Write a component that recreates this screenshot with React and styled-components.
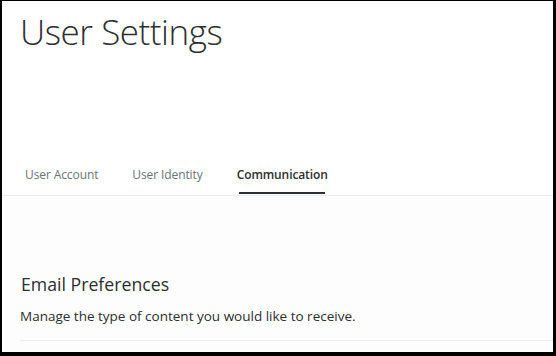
import React from "react";
import styled, { createGlobalStyle } from "styled-components";

const Global = createGlobalStyle`
  html, body { margin: 0; padding: 0; background: #000; }
  body { font-family: "Open Sans", "Liberation Sans", sans-serif; }
  #root { width: 556px; height: 356px; padding: 1px 3px 4px 2px; box-sizing: border-box; }
`;

const Page = styled.div`
  width: 100%;
  height: 100%;
  background: #fff;
  display: flex;
  flex-direction: column;
  overflow: hidden;
`;

const Header = styled.header`
  padding: 7px 0 0 18px;
  height: 148px;
  box-sizing: border-box;
`;

const Title = styled.h1`
  margin: 0;
  font-family: "Open Sans", sans-serif;
  font-weight: 300;
  font-size: 35px;
  line-height: 48px;
  color: #2c2e2f;
  letter-spacing: -0.45px;
`;

const TabBar = styled.nav`
  display: flex;
  gap: 34px;
  padding-left: 23px;
  border-bottom: 1px solid #eaeced;
  height: 47px;
  box-sizing: border-box;
`;

const Tab = styled.div`
  position: relative;
  font-size: 12px;
  line-height: 16px;
  padding-top: 18px;
  color: ${(p) => (p.$active ? "#2c2e2f" : "#6c7378")};
  font-weight: ${(p) => (p.$active ? 600 : 400)};
  letter-spacing: ${(p) => (p.$active ? "-0.1px" : "-0.1px")};
  &::after {
    content: "";
    display: ${(p) => (p.$active ? "block" : "none")};
    position: absolute;
    left: 2px;
    right: 3px;
    bottom: 1px;
    height: 2px;
    background: #2c2e2f;
  }
`;

const Content = styled.section`
  flex: 1;
  background: #fdfdfd;
  padding: 76px 0 0 18px;
`;

const SectionTitle = styled.h2`
  margin: 0 0 0 1px;
  font-size: 17.7px;
  font-weight: 400;
  line-height: 24px;
  color: #2c2e2f;
`;

const SectionText = styled.p`
  margin: 10px 0 0;
  font-size: 13.5px;
  line-height: 20px;
  color: #2c2e2f;
  padding-bottom: 14px;
  border-bottom: 1px solid #eaeced;
`;

export default function App() {
  return (
    <>
      <Global />
      <Page>
        <Header>
          <Title>User Settings</Title>
        </Header>
        <TabBar>
          <Tab>User Account</Tab>
          <Tab>User Identity</Tab>
          <Tab $active>Communication</Tab>
        </TabBar>
        <Content>
          <SectionTitle>Email Preferences</SectionTitle>
          <SectionText>Manage the type of content you would like to receive.</SectionText>
        </Content>
      </Page>
    </>
  );
}
